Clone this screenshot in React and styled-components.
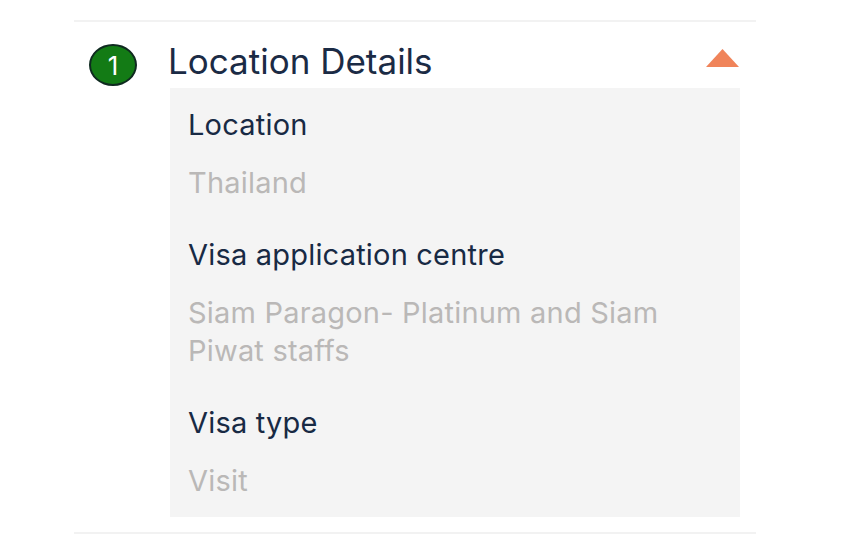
import React from 'react';
import styled, { createGlobalStyle } from 'styled-components';

const GlobalStyle = createGlobalStyle`
  body {
    margin: 0;
    background: #fff;
    font-family: Inter, "Noto Sans", sans-serif;
  }
`;

const Section = styled.section`
  width: 682px;
  margin: 20px 0 0 74px;
  border-top: 2px solid #f2f2f2;
  border-bottom: 2px solid #f2f2f2;
  padding-bottom: 15px;
`;

const Header = styled.div`
  display: flex;
  align-items: flex-start;
  height: 66px;
  padding: 0 17px 0 15px;
`;

const Badge = styled.span`
  width: 44px;
  height: 38px;
  margin-top: 22px;
  border-radius: 50%;
  background: #137b15;
  border: 2px solid #0f2a20;
  color: #fff;
  font-size: 26px;
  display: flex;
  align-items: center;
  justify-content: center;
  flex-shrink: 0;
`;

const Title = styled.h2`
  margin: 18px 0 0 31px;
  flex: 1;
  font-size: 35px;
  line-height: 42px;
  font-weight: 400;
  color: #1b2b45;
`;

const Caret = styled.svg`
  width: 33px;
  height: 18px;
  margin-top: 27px;
`;

const Panel = styled.div`
  margin-left: 96px;
  margin-right: 16px;
  background: #f4f4f4;
  padding: 18px 18px 17px;
`;

const Label = styled.div`
  font-size: 29px;
  line-height: 38px;
  letter-spacing: 0.2px;
  color: #182a44;
`;

const Value = styled.div`
  font-size: 29px;
  line-height: 38px;
  letter-spacing: 0.2px;
  color: #bab8b7;
  margin-top: 20px;
  margin-bottom: 34px;
  &:last-child {
    margin-bottom: 0;
  }
`;

const fields = [
  { label: 'Location', value: 'Thailand' },
  { label: 'Visa application centre', value: 'Siam Paragon- Platinum and Siam Piwat staffs' },
  { label: 'Visa type', value: 'Visit' },
];

export default function App() {
  return (
    <>
      <GlobalStyle />
      <Section>
        <Header>
          <Badge>1</Badge>
          <Title>Location Details</Title>
          <Caret viewBox="0 0 33 18">
            <path d="M0 18 L16.5 0 L33 18 Z" fill="#f0845a" />
          </Caret>
        </Header>
        <Panel>
          {fields.map((f) => (
            <React.Fragment key={f.label}>
              <Label>{f.label}</Label>
              <Value>{f.value}</Value>
            </React.Fragment>
          ))}
        </Panel>
      </Section>
    </>
  );
}
